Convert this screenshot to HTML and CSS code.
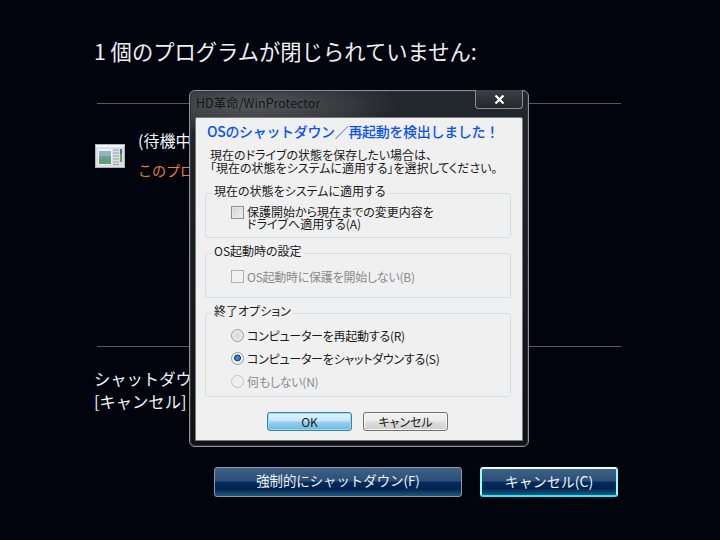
FILE: index.html
```html
<!DOCTYPE html>
<html lang="ja">
<head>
<meta charset="utf-8">
<title>HD革命/WinProtector</title>
<link rel="stylesheet" href="styles.css">
</head>
<body>
<main class="screen">
  <h1 class="headline">1 個のプログラムが閉じられていません:</h1>
  <hr class="rule rule-top">
  <section class="app-row">
    <svg class="app-icon" width="30" height="24" viewBox="0 0 30 24">
      <rect x="0.5" y="0.5" width="29" height="23" fill="#d9dfe2" stroke="#aeb4b8"/>
      <rect x="1" y="1" width="28" height="2" fill="#f4f6f7"/>
      <rect x="3" y="5" width="14" height="16" fill="#eef1f2"/>
      <rect x="4" y="7" width="12" height="13" fill="#6f9f96"/>
      <rect x="4" y="7" width="12" height="5" fill="#8fb5c2"/>
      <rect x="4" y="15" width="12" height="5" fill="#5fa07a"/>
      <path d="M18 6h6M18 9h6M18 12h6M18 15h6M18 18h6M18 20.500h6" stroke="#9aa3a6"/>
      <rect x="25" y="5" width="2" height="5" fill="#3a6fa8"/>
      <rect x="25" y="10" width="2" height="8" fill="#5fa062"/>
    </svg>
    <div class="app-text">
      <p class="app-name">(待機中のプログラム)</p>
      <p class="app-note">このプログラムはシャットダウンを妨げています</p>
    </div>
  </section>
  <hr class="rule rule-bottom">
  <p class="notice">シャットダウンするには [強制的にシャットダウン] を<br>[キャンセル] をクリックしてください。</p>
  <div class="actions">
    <button class="dark-btn force">強制的にシャットダウン(F)</button>
    <button class="dark-btn cancel">キャンセル(C)</button>
  </div>
</main>

<div class="dialog">
  <div class="titlebar">
    <span class="title">HD革命/WinProtector</span>
    <span class="close"><svg width="11" height="9" viewBox="0 0 11 9"><path d="M1.500 0.500l8 8M9.500 0.500l-8 8" stroke="#fff" stroke-width="2.200" fill="none"/></svg></span>
  </div>
  <div class="client">
    <h2 class="heading">OSのシャットダウン／再起動を検出しました！</h2>
    <p class="intro">現在のドライブの状態を保存したい場合は、<br>「現在の状態をシステムに適用する」を選択してください。</p>

    <fieldset class="group group-a">
      <legend>現在の状態をシステムに適用する</legend>
      <label class="option check-option"><span class="check"></span><span>保護開始から現在までの変更内容を<br>ドライブへ適用する(A)</span></label>
    </fieldset>

    <fieldset class="group group-b">
      <legend>OS起動時の設定</legend>
      <label class="option disabled"><span class="check off"></span><span>OS起動時に保護を開始しない(B)</span></label>
    </fieldset>

    <fieldset class="group group-c">
      <legend>終了オプション</legend>
      <label class="option"><span class="radio"></span><span>コンピューターを再起動する(R)</span></label>
      <label class="option"><span class="radio on"></span><span>コンピューターをシャットダウンする(S)</span></label>
      <label class="option disabled"><span class="radio off"></span><span>何もしない(N)</span></label>
    </fieldset>

    <div class="dialog-actions">
      <button class="win-btn default">OK</button>
      <button class="win-btn">キャンセル</button>
    </div>
  </div>
</div>
</body>
</html>
```

FILE: styles.css
```css
* { box-sizing: border-box; }
html, body { margin: 0; height: 100%; }
body {
  width: 720px;
  height: 540px;
  overflow: hidden;
  position: relative;
  background: #01040d;
  font-family: "Noto Sans CJK JP", "Noto Sans", sans-serif;
  color: #f2f4f6;
}
p, h1, h2 { margin: 0; font-weight: 400; }

.screen { display: flex; flex-direction: column; padding: 36px 99px 0 94px; height: 540px; }
.headline { font-size: 21.3px; line-height: 30px; height: 30px; white-space: nowrap; color: #eef0f2; }
.rule { border: 0; height: 1px; background: #565a5e; margin: 0 0 0 3px; }
.rule-top { margin-top: 37px; }
.app-row { display: flex; align-items: center; gap: 13px; margin: 24px 0 0 1px; height: 59px; }
.app-icon { flex: none; margin-bottom: 4px; }
.app-text { margin-top: -7px; }
.app-name { font-size: 16px; line-height: 24px; white-space: nowrap; }
.app-note { font-size: 14px; line-height: 20px; margin-top: 8px; color: #ee7a3e; white-space: nowrap; }
.rule-bottom { margin-top: 159px; }
.notice { font-size: 16.3px; line-height: 23px; margin-top: 20px; white-space: nowrap; color: #f2f4f6; }

.actions { display: flex; gap: 18px; margin: 54px 3px 0 120px; }
.dark-btn {
  height: 30px;
  padding: 0 0 2px;
  font: 400 14px/1 "Noto Sans CJK JP", "Noto Sans", sans-serif;
  color: #eef4fa;
  border-radius: 3px;
  background: linear-gradient(#3f6187 0%, #2c4f78 45%, #032a5c 52%, #02234f 75%, #1f5a80 100%);
}
.force { width: 248px; border: 1px solid #8d99a6; font-size: 13.4px; }
.cancel { width: 138px; border: 2px solid #e8ffff; border-bottom-color: #1cf2fa; border-left-color: #8fffff; border-right-color: #8fffff; }

.dialog {
  position: absolute;
  left: 189px;
  top: 90px;
  width: 340px;
  height: 357px;
  border: 1px solid #8d9296;
  border-radius: 6px;
  background: radial-gradient(ellipse 150px 30px at 60px 14px, #54575a 0%, #3a3d40 60%, rgba(30,34,38,0) 100%), linear-gradient(#23282e, #1a1d22 40%, #0f1114);
  box-shadow: inset 0 0 0 1px #30343a;
  padding: 0 5px 5px;
  display: flex;
  flex-direction: column;
}
.titlebar { height: 26px; flex: none; position: relative; }
.title { position: absolute; left: 1px; top: 4px; font-size: 12.5px; line-height: 16px; color: #14161a; white-space: nowrap; }
.close {
  position: absolute;
  right: 0;
  top: -1px;
  width: 48px;
  height: 19px;
  border: 1px solid #8b8f93;
  border-top: 0;
  border-radius: 0 0 4px 4px;
  background: linear-gradient(#3d4044, #23262a);
  display: flex;
  align-items: center;
  justify-content: center;
}
.client {
  flex: 1;
  background: #f0f0f0;
  border: 1px solid #777b80;
  border-radius: 2px 2px 0 0;
  color: #1a1a1a;
  font-size: 12px;
  line-height: 12px;
  padding: 4px 11px 0 9px;
  display: flex;
  flex-direction: column;
  font-feature-settings: "palt";
}
.heading { font-size: 14px; line-height: 18px; font-weight: 500; color: #0a50ff; margin-left: 2px; white-space: nowrap; font-feature-settings: normal; letter-spacing: -0.33px; }
.intro { margin: 8px 0 0 5px; line-height: 13px; white-space: nowrap; }
.group {
  margin: 0;
  padding: 0;
  border: 1px solid #d5dfe5;
  border-radius: 3px;
  min-inline-size: 0;
}
.group legend { margin-left: 6px; padding: 0 2px 4px; font-size: 12px; line-height: 14px; white-space: nowrap; }
.group-a { height: 54px; margin-top: 10px; }
.group-b { height: 54px; margin-top: 6px; }
.group-c { height: 93px; margin-top: 6px; }
.option { display: flex; align-items: center; gap: 3px; margin-left: 25px; white-space: nowrap; letter-spacing: -0.25px; }
.check-option { align-items: flex-start; margin-top: 4px; line-height: 12px; letter-spacing: 0; }
.group-b .option { margin-top: 8px; }
.group-c .option { height: 23px; }
.group-c .option:first-of-type { margin-top: 2px; }
.disabled { color: #8a8a8a; }
.check {
  width: 13px;
  height: 13px;
  flex: none;
  border: 1px solid #8e8f8f;
  background: linear-gradient(135deg, #d0d0d0, #f2f2f2);
  box-shadow: inset 0 0 0 1px #e6e6e6;
}
.check.off { border-color: #b1b1b1; background: #f2f2f2; box-shadow: none; }
.radio {
  width: 13px;
  height: 13px;
  flex: none;
  border-radius: 50%;
  border: 1px solid #9a9a9a;
  background: radial-gradient(circle, #d4d4d4 0%, #e4e4e4 45%, #f4f4f4 100%);
}
.radio.on { background: radial-gradient(circle at 50% 45%, #5ea3e2 0%, #1f5fa8 30%, #0e3f7a 38%, #f2f2f2 46%); }
.radio.off { border-color: #c4c4c4; background: #efefef; }
.dialog-actions { display: flex; gap: 11px; margin: 15px 0 0 62px; }
.win-btn {
  width: 85px;
  height: 19px;
  padding: 0;
  font: 400 12px/1 "Noto Sans CJK JP", "Noto Sans", sans-serif;
  font-feature-settings: "palt";
  color: #1a1a1a;
  border: 1px solid #707070;
  border-radius: 3px;
  background: linear-gradient(#f2f2f2 0%, #ebebeb 48%, #dddddd 52%, #cfcfcf 100%);
  box-shadow: inset 0 0 0 1px #f8f8f8;
}
.win-btn.default { border-color: #3c7fb1; background: linear-gradient(#e5f4fc 0%, #c4e5f6 48%, #98d1ef 52%, #6cb8e0 100%); box-shadow: inset 0 0 0 1px #8ee0f8; }
```
